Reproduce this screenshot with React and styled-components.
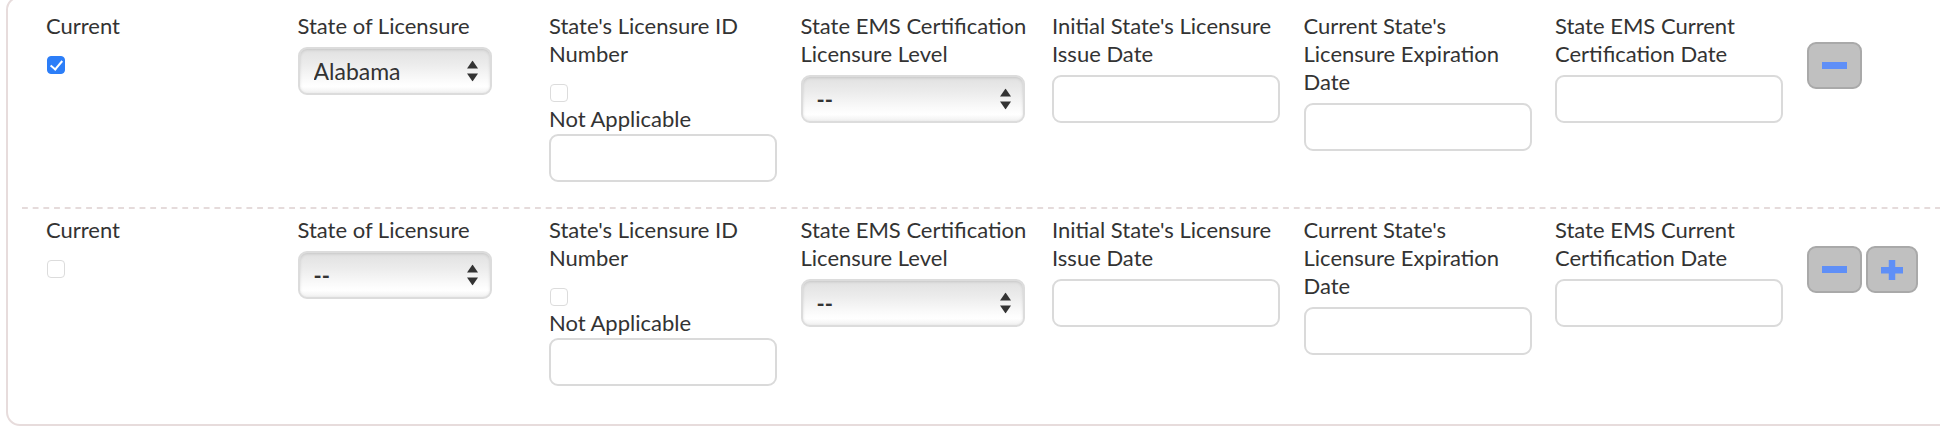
import React from "react";
import styled, { createGlobalStyle } from "styled-components";

const GlobalStyle = createGlobalStyle`
  html, body {
    margin: 0;
    padding: 0;
    background: #fff;
    overflow: hidden;
  }
  body {
    font-family: Lato, "Open Sans", "Liberation Sans", sans-serif;
    color: #333;
  }
`;

/* styled components */
const Panel = styled.div`
  width: 2000px;
  margin: -4px 0 0 6px;
  padding: 14px 0 38px 0;
  border: 2px solid #e7dcdc;
  border-radius: 14px;
  box-sizing: border-box;
`;

const Row = styled.div`
  display: grid;
  grid-template-columns: repeat(7, 251.5px) auto;
  align-items: start;
  padding: 0 0 0 38px;
  padding-bottom: ${props => (props.$last ? "0" : "25px")};
`;

const Divider = styled.div`
  height: 2px;
  margin: 0 0 7px 14px;
  background-image: linear-gradient(
    to right,
    #e5dbdb 0,
    #e5dbdb 6px,
    transparent 6px
  );
  background-size: 10.7px 2px;
  background-repeat: repeat-x;
`;

const Col = styled.div`
  display: flex;
  flex-direction: column;
  align-items: flex-start;
  width: 228px;
`;

const Label = styled.label`
  display: block;
  font-size: 22px;
  line-height: 28px;
  margin-bottom: ${props => (props.$tight ? "1px" : "7px")};
`;

const Check = styled.input.attrs({ type: "checkbox" })`
  appearance: none;
  -webkit-appearance: none;
  position: relative;
  width: 18px;
  height: 18px;
  margin: 9px 0 3px 1px;
  border: 1px solid #dcdcdc;
  border-radius: 4px;
  background: #fff;
  box-sizing: border-box;

  &:checked {
    background: #2c7ef8;
    border-color: #2c7ef8;
  }

  &:checked::after {
    content: "";
    position: absolute;
    left: 5px;
    top: 1px;
    width: 5px;
    height: 10px;
    border: solid #fff;
    border-width: 0 2.5px 2.5px 0;
    transform: rotate(40deg);
  }
`;

const SelectWrap = styled.div`
  position: relative;
  width: ${props => props.$w}px;
`;

const Select = styled.select`
  appearance: none;
  -webkit-appearance: none;
  width: 100%;
  height: 48px;
  padding: 0 36px 0 14px;
  font-family: inherit;
  font-size: ${props => (props.$dash ? "22px" : "23px")};
  font-weight: ${props => (props.$dash ? "700" : "400")};
  color: #333;
  border: 2px solid #dcdcdc;
  border-radius: 9px;
  background: linear-gradient(
    to bottom,
    #e1e1e1 0%,
    #ececec 35%,
    #fafafa 70%,
    #fff 85%,
    #f1f1f1 100%
  );
  box-shadow: inset 0 1px 3px rgba(0, 0, 0, 0.12);
  box-sizing: border-box;
  outline: none;
`;

const Arrows = styled.svg`
  position: absolute;
  right: 14px;
  top: 50%;
  transform: translateY(-50%);
  pointer-events: none;
`;

const TextInput = styled.input.attrs({ type: "text" })`
  width: ${props => props.$w || 228}px;
  height: 48px;
  border: 2px solid #dadada;
  border-radius: 9px;
  box-sizing: border-box;
  background: #fff;
  font-family: inherit;
  font-size: 20px;
  outline: none;
`;

const Buttons = styled.div`
  display: flex;
  gap: 4px;
  margin-top: 30px;
`;

const IconButton = styled.button`
  display: flex;
  align-items: center;
  justify-content: center;
  width: ${props => props.$w}px;
  height: 47px;
  padding: 0;
  background: #c0c0c0;
  border: 2px solid #a9a9a9;
  border-radius: 9px;
  box-sizing: border-box;
`;

function SelectBox({ width, value }) {
  const dash = value === "--";
  return (
    <SelectWrap $w={width}>
      <Select $dash={dash} defaultValue={value}>
        <option>{value}</option>
      </Select>
      <Arrows width="11" height="21" viewBox="0 0 11 21">
        <polygon points="5.5,0 11,8 0,8" fill="#333" />
        <polygon points="0,13 11,13 5.5,21" fill="#333" />
      </Arrows>
    </SelectWrap>
  );
}

function MinusIcon() {
  return (
    <svg width="25" height="8" viewBox="0 0 25 8">
      <rect x="0" y="0" width="25" height="7" fill="#5f8ff7" />
    </svg>
  );
}

function PlusIcon() {
  return (
    <svg width="22" height="20" viewBox="0 0 22 20">
      <rect x="0" y="7" width="22" height="6.5" fill="#5f8ff7" />
      <rect x="7.75" y="0" width="6.5" height="20" fill="#5f8ff7" />
    </svg>
  );
}

function LicenseRow({ checked, state, last }) {
  return (
    <Row $last={last}>
      <Col>
        <Label>Current</Label>
        <Check defaultChecked={checked} />
      </Col>
      <Col>
        <Label>State of Licensure</Label>
        <SelectBox width={194} value={state} />
      </Col>
      <Col>
        <Label>State's Licensure ID Number</Label>
        <Check />
        <Label $tight>Not Applicable</Label>
        <TextInput />
      </Col>
      <Col>
        <Label>State EMS Certification Licensure Level</Label>
        <SelectBox width={224} value="--" />
      </Col>
      <Col>
        <Label>Initial State's Licensure Issue Date</Label>
        <TextInput />
      </Col>
      <Col>
        <Label>Current State's Licensure Expiration Date</Label>
        <TextInput />
      </Col>
      <Col>
        <Label>State EMS Current Certification Date</Label>
        <TextInput />
      </Col>
      <Buttons>
        <IconButton $w={55}>
          <MinusIcon />
        </IconButton>
        {last && (
          <IconButton $w={52}>
            <PlusIcon />
          </IconButton>
        )}
      </Buttons>
    </Row>
  );
}

export default function App() {
  return (
    <>
      <GlobalStyle />
      <Panel>
        <LicenseRow checked state="Alabama" />
        <Divider />
        <LicenseRow state="--" last />
      </Panel>
    </>
  );
}
